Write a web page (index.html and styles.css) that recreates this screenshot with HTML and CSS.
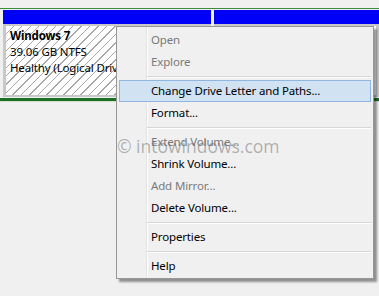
FILE: index.html
```html
<!DOCTYPE html>
<html lang="en">

<head>
    <meta charset="UTF-8">
    <title>Disk Management</title>
    <link rel="stylesheet" href="styles.css">
</head>

<body>
    <div class="diskArea">
        <div class="extended">
            <div class="volume volumeLeft">
                <div class="volumeHead"></div>
                <div class="volumeBody">
                    <div class="hatched">
                        <div class="volName">Windows 7</div>
                        <div>39.06 GB NTFS</div>
                        <div>Healthy (Logical Drive)</div>
                    </div>
                </div>
            </div>
            <div class="volume volumeRight">
                <div class="volumeHead"></div>
                <div class="volumeBody">
                    <div class="plain"></div>
                </div>
            </div>
        </div>
    </div>

    <ul class="contextMenu">
        <li class="disabled">Open</li>
        <li class="disabled">Explore</li>
        <li class="separator"></li>
        <li class="active">Change Drive Letter and Paths...</li>
        <li>Format...</li>
        <li class="separator"></li>
        <li class="disabled">Extend Volume...</li>
        <li>Shrink Volume...</li>
        <li class="disabled">Add Mirror...</li>
        <li>Delete Volume...</li>
        <li class="separator"></li>
        <li>Properties</li>
        <li class="separator"></li>
        <li>Help</li>
    </ul>

    <div class="watermark">© intowindows.com</div>
</body>

</html>
```

FILE: styles.css
```css
body {
    margin: 0;
    width: 379px;
    height: 296px;
    overflow: hidden;
    background-color: #f0f0f0;
    font-family: "Noto Sans", "Open Sans", sans-serif;
    font-size: 11.5px;
    letter-spacing: -0.15px;
    color: #000;
}

.diskArea {
    padding-top: 8px;
}

.extended {
    display: flex;
    gap: 3px;
    padding: 1px 0 1px 3px;
    border-top: 1px solid #3c8a3c;
    border-bottom: 3px solid #1f6e25;
    box-shadow: 0 1px 0 #cfe0cf;
}

.volumeLeft {
    width: 208px;
}

.volumeRight {
    flex: 1;
}

.volumeHead {
    height: 14px;
    background-color: #0000f8;
}

.volumeBody {
    height: 69px;
    padding: 2px 3px;
    background-color: #c8c8c8;
}

.hatched {
    height: 100%;
    padding: 2px 4px;
    box-sizing: border-box;
    line-height: 16px;
    white-space: nowrap;
    overflow: hidden;
    background-color: #fff;
    background-image: repeating-linear-gradient(135deg, #fff 0, #fff 5px, #a8a8a8 5px, #a8a8a8 6px);
}

.plain {
    height: 100%;
    background-color: #fff;
}

.volName {
    font-weight: bold;
}

.contextMenu {
    position: absolute;
    left: 116px;
    top: 26px;
    width: 252px;
    margin: 0;
    padding: 2px 2px 1px 2px;
    list-style: none;
    border: 1px solid #979797;
    background-color: #f0f0f0;
    background-image: linear-gradient(to right, transparent 29px, #e2e2e2 29px, #e2e2e2 30px, #fff 30px, #fff 31px, transparent 31px);
    box-shadow: 3px 3px 2px rgba(0, 0, 0, 0.4);
}

.contextMenu li {
    height: 22px;
    line-height: 22px;
    padding-left: 32px;
    box-sizing: border-box;
    white-space: nowrap;
}

.contextMenu li.disabled {
    color: #7a7a7a;
}

.contextMenu li.active {
    background-color: #d1e2f2;
    border: 1px solid #8fb6e0;
    line-height: 20px;
    padding-left: 31px;
}

.contextMenu li.separator {
    height: 7px;
    margin-left: 28px;
    padding: 0;
    background-image: linear-gradient(to bottom, transparent 3px, #d7d7d7 3px, #d7d7d7 4px, #fff 4px, #fff 5px, transparent 5px);
}

.watermark {
    position: absolute;
    left: 117px;
    top: 134px;
    font-family: "Open Sans", sans-serif;
    font-size: 17.5px;
    letter-spacing: 0;
    color: rgba(90, 90, 90, 0.45);
    white-space: nowrap;
}
```
